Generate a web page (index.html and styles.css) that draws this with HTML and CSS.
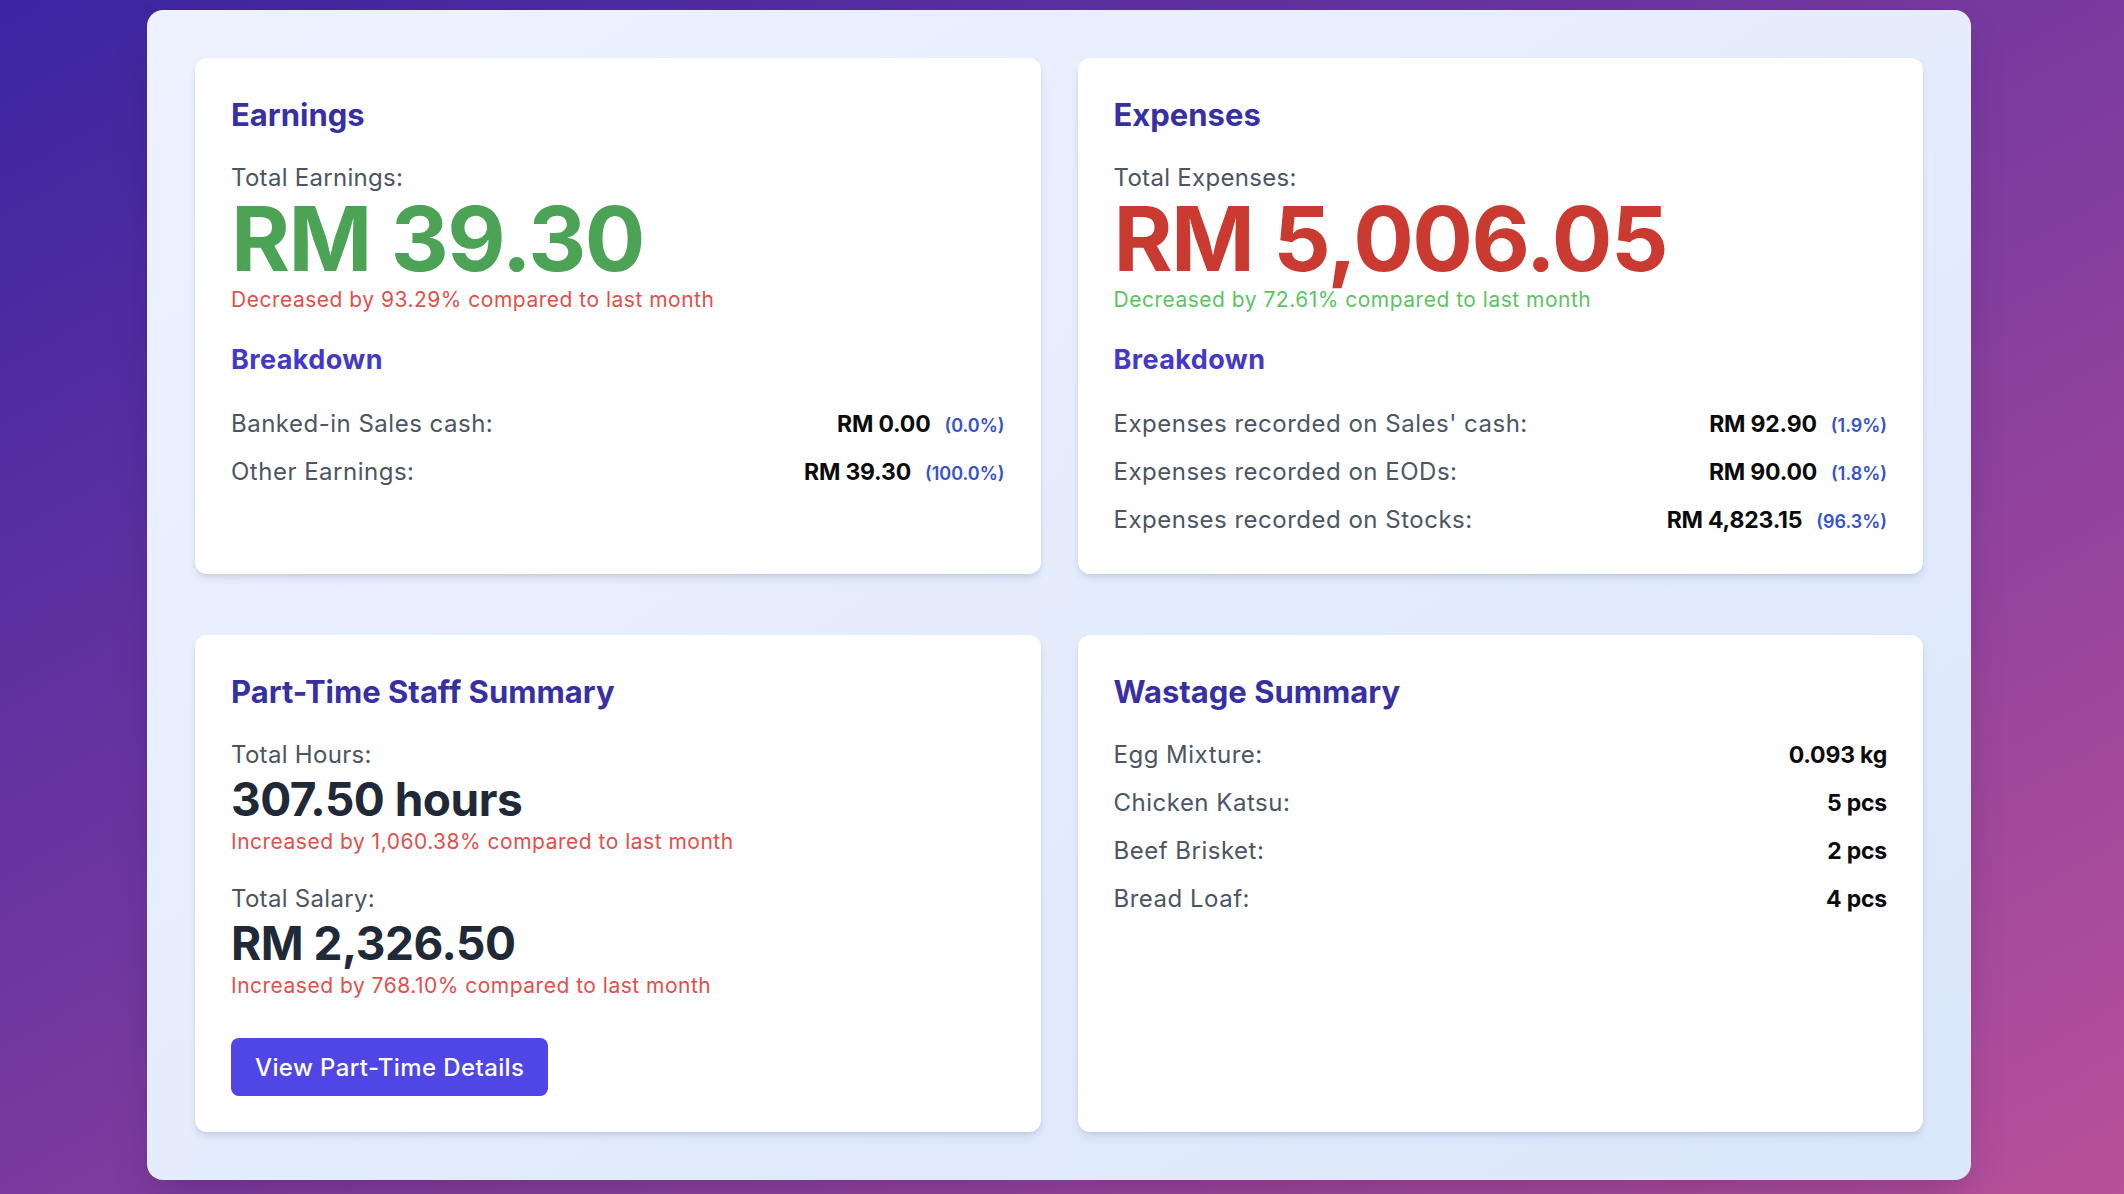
FILE: index.html
```html
<!DOCTYPE html>
<html lang="en">
<head>
<meta charset="utf-8">
<title>Monthly Summary</title>
<link rel="stylesheet" href="styles.css">
</head>
<body>
<main class="panel">
  <div class="grid">
    <section class="card">
      <h2 class="card-title">Earnings</h2>
      <p class="label">Total Earnings:</p>
      <p class="big big-green">RM 39.30</p>
      <p class="change change-red">Decreased by 93.29% compared to last month</p>
      <h3 class="sub-title">Breakdown</h3>
      <ul class="rows">
        <li class="row"><span class="row-label">Banked-in Sales cash:</span><span class="row-value"><strong>RM 0.00</strong><span class="pct">(0.0%)</span></span></li>
        <li class="row"><span class="row-label">Other Earnings:</span><span class="row-value"><strong>RM 39.30</strong><span class="pct">(100.0%)</span></span></li>
      </ul>
    </section>

    <section class="card">
      <h2 class="card-title">Expenses</h2>
      <p class="label">Total Expenses:</p>
      <p class="big big-red">RM 5,006.05</p>
      <p class="change change-green">Decreased by 72.61% compared to last month</p>
      <h3 class="sub-title">Breakdown</h3>
      <ul class="rows">
        <li class="row"><span class="row-label">Expenses recorded on Sales' cash:</span><span class="row-value"><strong>RM 92.90</strong><span class="pct">(1.9%)</span></span></li>
        <li class="row"><span class="row-label">Expenses recorded on EODs:</span><span class="row-value"><strong>RM 90.00</strong><span class="pct">(1.8%)</span></span></li>
        <li class="row"><span class="row-label">Expenses recorded on Stocks:</span><span class="row-value"><strong>RM 4,823.15</strong><span class="pct">(96.3%)</span></span></li>
      </ul>
    </section>

    <section class="card">
      <h2 class="card-title">Part-Time Staff Summary</h2>
      <p class="label">Total Hours:</p>
      <p class="mid">307.50 hours</p>
      <p class="change change-red change-tight">Increased by 1,060.38% compared to last month</p>
      <p class="label label-second">Total Salary:</p>
      <p class="mid">RM 2,326.50</p>
      <p class="change change-red change-tight">Increased by 768.10% compared to last month</p>
      <button class="btn" type="button">View Part-Time Details</button>
    </section>

    <section class="card">
      <h2 class="card-title">Wastage Summary</h2>
      <ul class="rows rows-waste">
        <li class="row"><span class="row-label">Egg Mixture:</span><span class="row-value"><strong>0.093 kg</strong></span></li>
        <li class="row"><span class="row-label">Chicken Katsu:</span><span class="row-value"><strong>5 pcs</strong></span></li>
        <li class="row"><span class="row-label">Beef Brisket:</span><span class="row-value"><strong>2 pcs</strong></span></li>
        <li class="row"><span class="row-label">Bread Loaf:</span><span class="row-value"><strong>4 pcs</strong></span></li>
      </ul>
    </section>
  </div>
</main>
</body>
</html>
```

FILE: styles.css
```css
* {
  box-sizing: border-box;
}

html, body {
  margin: 0;
  padding: 0;
}

body {
  width: 2124px;
  height: 1194px;
  overflow: hidden;
  font-family: Inter, "Noto Sans", sans-serif;
  background: linear-gradient(to bottom right, #3b25a2 0%, #7a3a9f 50%, #b8509a 100%);
  padding-top: 10px;
  padding-left: 147px;
}

.panel {
  width: 1824px;
  padding: 48px;
  border-radius: 16px;
  background: linear-gradient(to bottom right, #eef2ff, #dbe7fb);
  box-shadow: 0 20px 40px -10px rgba(20, 10, 60, 0.25);
}

.grid {
  display: grid;
  grid-template-columns: 1fr 1fr;
  column-gap: 37px;
  row-gap: 61px;
}

.card {
  background: #ffffff;
  border-radius: 12px;
  padding: 37px 36px 36px;
  box-shadow: 0 5px 8px -1px rgba(30, 40, 90, 0.12), 0 2px 5px -2px rgba(30, 40, 90, 0.1);
  display: flex;
  flex-direction: column;
  align-items: stretch;
}

.card-title {
  margin: 0;
  font-size: 31px;
  line-height: 40px;
  font-weight: 700;
  color: #3730a3;
}

.label {
  margin: 27px 0 0;
  font-size: 24px;
  line-height: 32px;
  letter-spacing: 0.3px;
  color: #4b5563;
}

.label-second {
  margin-top: 27px;
}

.big {
  margin: 0;
  font-size: 90px;
  line-height: 90px;
  font-weight: 700;
  letter-spacing: -1.5px;
}

.big-green {
  color: #4da355;
}

.big-red {
  color: #ca3a31;
}

.mid {
  margin: 2px 0 0;
  font-size: 46px;
  line-height: 52px;
  font-weight: 700;
  letter-spacing: -0.5px;
  color: #1f2937;
}

.change {
  margin: 2px 0 0;
  font-size: 21px;
  line-height: 28px;
  letter-spacing: 0.5px;
}

.change-tight {
  margin-top: 3px;
}

.change-red {
  color: #e24f4b;
}

.change-green {
  color: #5cc462;
}

.sub-title {
  margin: 29px 0 0;
  font-size: 27px;
  line-height: 34px;
  font-weight: 700;
  letter-spacing: 0.4px;
  color: #4338ca;
}

.rows {
  list-style: none;
  margin: 29px 0 0;
  padding: 0;
  display: flex;
  flex-direction: column;
  gap: 12px;
}

.rows-waste {
  margin-top: 25px;
}

.row {
  display: flex;
  justify-content: space-between;
  align-items: baseline;
  height: 36px;
  font-size: 24px;
  line-height: 36px;
}

.row-label {
  color: #4b5563;
  letter-spacing: 0.5px;
}

.row-value {
  white-space: nowrap;
}

.row-value strong {
  font-size: 23px;
  font-weight: 700;
  letter-spacing: -0.2px;
  color: #0b0b0b;
}

.pct {
  margin-left: 14px;
  font-size: 18px;
  line-height: 1;
  font-weight: 600;
  color: #3451d1;
}

.btn {
  align-self: flex-start;
  margin-top: 38px;
  height: 58px;
  padding: 0 24px;
  border: 0;
  border-radius: 8px;
  background: #4f46e5;
  color: #ffffff;
  font-family: inherit;
  font-size: 24px;
  letter-spacing: 0.4px;
  font-weight: 500;
}
```
